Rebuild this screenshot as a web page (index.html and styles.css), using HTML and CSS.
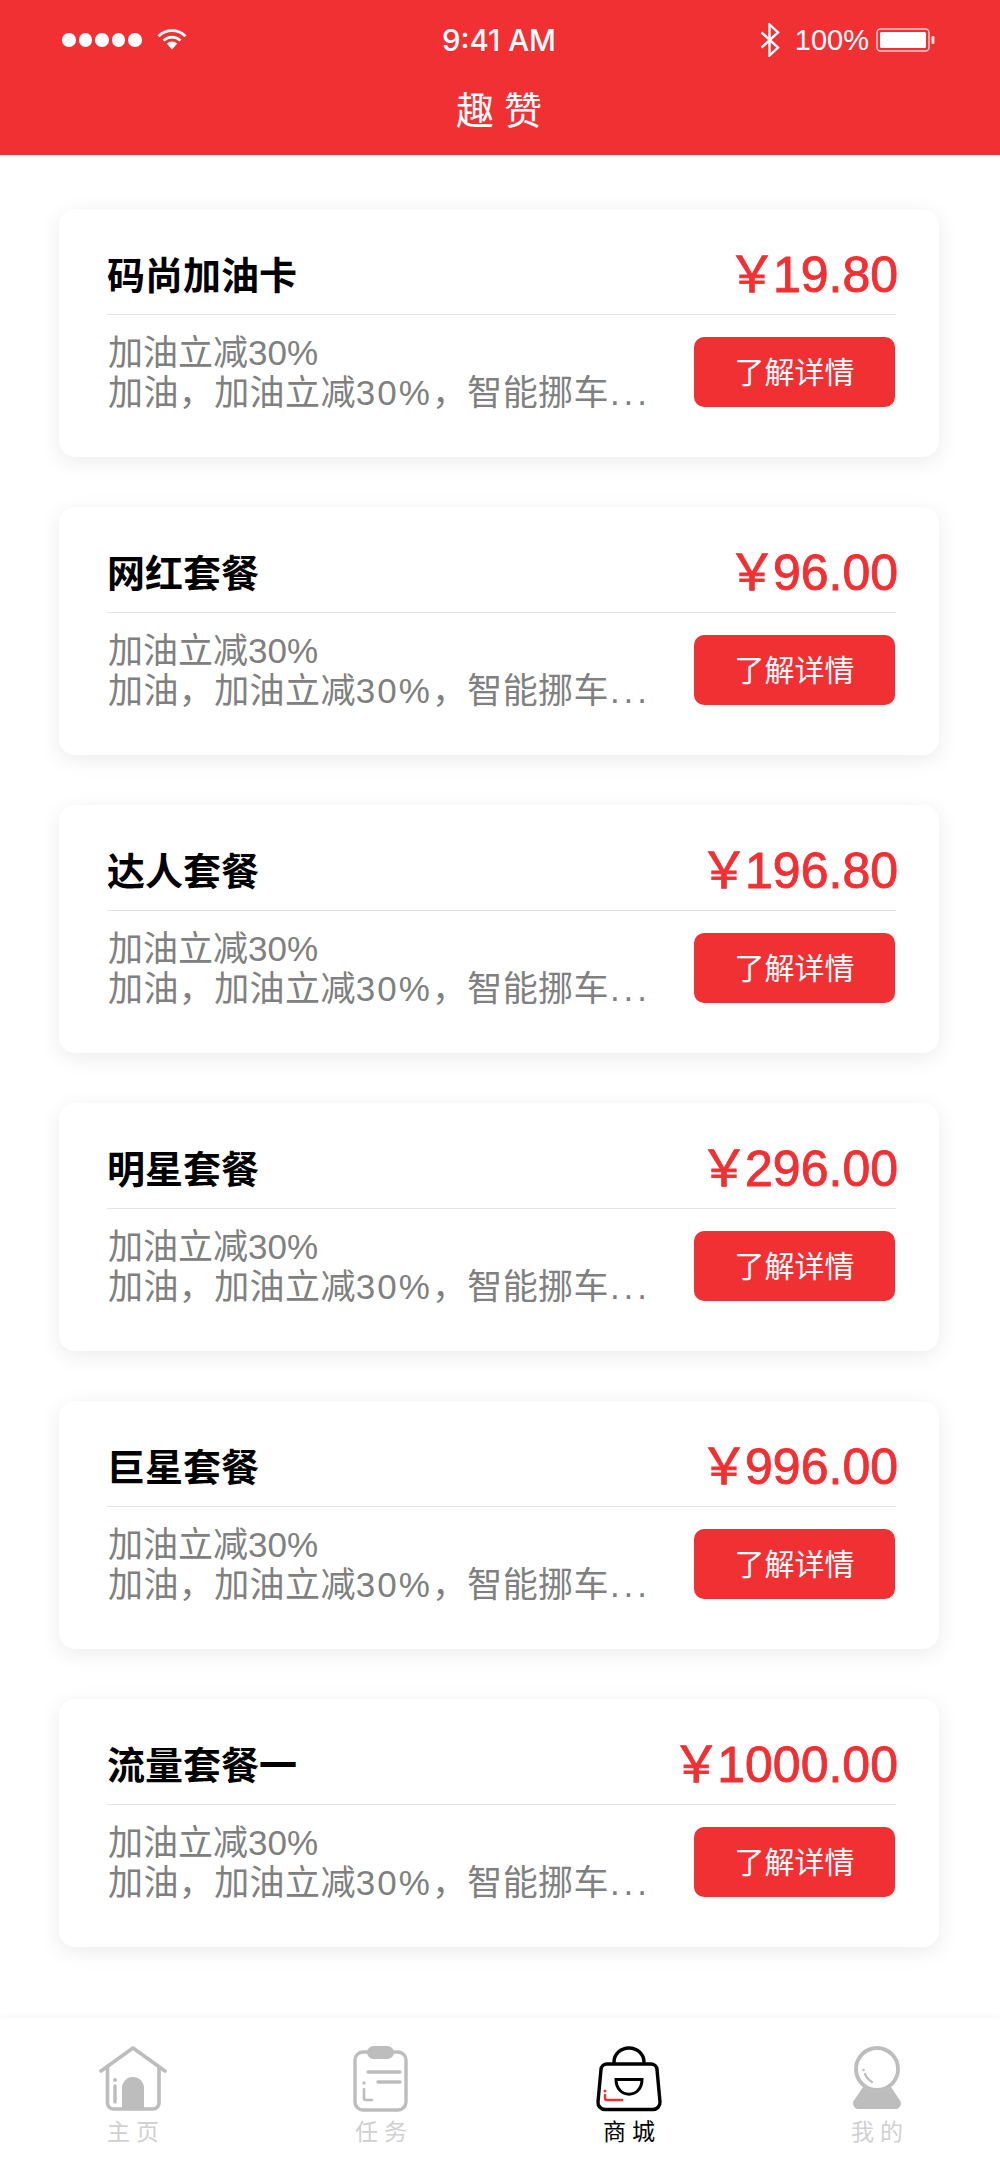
FILE: index.html
```html
<!DOCTYPE html>
<html lang="zh-CN">
<head>
<meta charset="utf-8">
<title>趣赞</title>
<link rel="stylesheet" href="styles.css">
</head>
<body>
<div class="page">
  <header class="header">
    <div class="status">
      <div class="status-left">
        <span class="dot"></span><span class="dot"></span><span class="dot"></span><span class="dot"></span><span class="dot"></span>
        <svg class="wifi" viewBox="0 0 30 22" width="30" height="22"><path d="M1.5 8.2C9 .8 21 .8 28.5 8.2" fill="none" stroke="#fff" stroke-width="2.6"/><path d="M6.5 12.6c4.8-4.6 12.2-4.6 17 0" fill="none" stroke="#fff" stroke-width="2.6"/><path d="M9.8 15.4c3-2.7 7.4-2.7 10.4 0L15 21.6z" fill="#fff"/></svg>
      </div>
      <div class="clock">9:41 AM</div>
      <div class="status-right">
        <svg class="bt" viewBox="0 0 20 34" width="20" height="34"><path d="M1.5 9.5 18 24.5 9.5 32.5V1.5L18 9.5 1.500 24.500" fill="none" stroke="#fff" stroke-width="2.400"/></svg>
        <span class="pct">100%</span>
        <svg class="batt" viewBox="0 0 60 24" width="60" height="24"><rect x="1" y="1" width="52" height="22" rx="3.500" fill="none" stroke="#fff" stroke-opacity=".75" stroke-width="1.500"/><rect x="4" y="4" width="46" height="16" rx="1.500" fill="#fff"/><rect x="55.500" y="8" width="3" height="8" rx="1.200" fill="#fff" fill-opacity=".8"/></svg>
      </div>
    </div>
    <h1 class="title">趣赞</h1>
  </header>

  <main class="list">
    <article class="card">
      <div class="card-top"><h2 class="name">码尚加油卡</h2><div class="price"><span class="yen">￥</span>19.80</div></div>
      <div class="card-body">
        <div class="desc"><p class="line">加油立减30%</p><p class="line line-long">加油，加油立减<span class="num">30%</span>，智能挪车<span class="more">...</span></p></div>
        <a class="btn">了解详情</a>
      </div>
    </article>
    <article class="card">
      <div class="card-top"><h2 class="name">网红套餐</h2><div class="price"><span class="yen">￥</span>96.00</div></div>
      <div class="card-body">
        <div class="desc"><p class="line">加油立减30%</p><p class="line line-long">加油，加油立减<span class="num">30%</span>，智能挪车<span class="more">...</span></p></div>
        <a class="btn">了解详情</a>
      </div>
    </article>
    <article class="card">
      <div class="card-top"><h2 class="name">达人套餐</h2><div class="price"><span class="yen">￥</span>196.80</div></div>
      <div class="card-body">
        <div class="desc"><p class="line">加油立减30%</p><p class="line line-long">加油，加油立减<span class="num">30%</span>，智能挪车<span class="more">...</span></p></div>
        <a class="btn">了解详情</a>
      </div>
    </article>
    <article class="card">
      <div class="card-top"><h2 class="name">明星套餐</h2><div class="price"><span class="yen">￥</span>296.00</div></div>
      <div class="card-body">
        <div class="desc"><p class="line">加油立减30%</p><p class="line line-long">加油，加油立减<span class="num">30%</span>，智能挪车<span class="more">...</span></p></div>
        <a class="btn">了解详情</a>
      </div>
    </article>
    <article class="card">
      <div class="card-top"><h2 class="name">巨星套餐</h2><div class="price"><span class="yen">￥</span>996.00</div></div>
      <div class="card-body">
        <div class="desc"><p class="line">加油立减30%</p><p class="line line-long">加油，加油立减<span class="num">30%</span>，智能挪车<span class="more">...</span></p></div>
        <a class="btn">了解详情</a>
      </div>
    </article>
    <article class="card">
      <div class="card-top"><h2 class="name">流量套餐一</h2><div class="price"><span class="yen">￥</span>1000.00</div></div>
      <div class="card-body">
        <div class="desc"><p class="line">加油立减30%</p><p class="line line-long">加油，加油立减<span class="num">30%</span>，智能挪车<span class="more">...</span></p></div>
        <a class="btn">了解详情</a>
      </div>
    </article>
  </main>

  <nav class="tabbar">
    <a class="tab">
      <svg class="icon" viewBox="0 0 70 66" width="70" height="66"><path d="M3 25 35 2 67 25" fill="none" stroke="#bdbdbd" stroke-width="3.600" stroke-linecap="round" stroke-linejoin="round"/><path d="M9.500 21V57a6 6 0 0 0 6 6H55a6 6 0 0 0 6-6V21" fill="none" stroke="#bdbdbd" stroke-width="3.600"/><path d="M24 63V42a11 11 0 0 1 22 0V63z" fill="#bdbdbd"/><circle cx="17" cy="34" r="2" fill="#bdbdbd"/><path d="M17 40V56" stroke="#bdbdbd" stroke-width="3.400" stroke-linecap="round"/></svg>
      <span class="tab-label">主页</span>
    </a>
    <a class="tab">
      <svg class="icon" viewBox="0 0 56 66" width="56" height="66"><rect x="2" y="6" width="51" height="58" rx="8" fill="none" stroke="#bdbdbd" stroke-width="3.400"/><rect x="14" y="0" width="27" height="13" rx="6.500" fill="#bdbdbd"/><path d="M15 26H47M25 36H47" stroke="#bdbdbd" stroke-width="3.400" stroke-linecap="round"/><circle cx="11" cy="37" r="1.700" fill="#bdbdbd"/><path d="M11 43V52a2 2 0 0 0 2 2H19" fill="none" stroke="#bdbdbd" stroke-width="2.600" stroke-linecap="round"/></svg>
      <span class="tab-label">任务</span>
    </a>
    <a class="tab tab-active">
      <svg class="icon" viewBox="0 0 68 66" width="68" height="66"><path d="M19 18V16a15 14 0 0 1 30 0V18" fill="none" stroke="#000" stroke-width="3.400"/><path d="M12 18H56a6 6 0 0 1 6 5.500L65 56a7 7 0 0 1-7 7.500H10a7 7 0 0 1-7-7.500L6 23.500A6 6 0 0 1 12 18z" fill="none" stroke="#000" stroke-width="3.400"/><path d="M21 33.500H47C47 53 21 53 21 33.500z" fill="none" stroke="#000" stroke-width="3"/><circle cx="10" cy="45" r="1.500" fill="#f23030"/><path d="M10 49V52a2 2 0 0 0 2 2H27" fill="none" stroke="#f23030" stroke-width="2.400" stroke-linecap="round"/></svg>
      <span class="tab-label">商城</span>
    </a>
    <a class="tab">
      <svg class="icon" viewBox="0 0 48 66" width="48" height="66"><path d="M10 41 2 53a6 6 0 0 0 2 10H44a6 6 0 0 0 2-10L38 41C30 47 18 47 10 41z" fill="#bdbdbd"/><circle cx="24" cy="23" r="21" fill="#fff" stroke="#bdbdbd" stroke-width="3.800"/><circle cx="10.500" cy="24" r="1.300" fill="#bdbdbd"/><path d="M12 28Q14 33 19 36" fill="none" stroke="#bdbdbd" stroke-width="2.200" stroke-linecap="round"/></svg>
      <span class="tab-label">我的</span>
    </a>
  </nav>
</div>
</body>
</html>
```

FILE: styles.css
```css
* { box-sizing: border-box; }

html, body { margin: 0; padding: 0; background: #fff; }

body {
  width: 1000px;
  height: 2166px;
  overflow: hidden;
  font-family: "Liberation Sans", "Noto Sans CJK SC", sans-serif;
}

.page {
  display: flex;
  flex-direction: column;
  height: 2166px;
}

.header {
  height: 155px;
  background: #f13033;
  color: #fff;
  flex: none;
}

.status {
  display: grid;
  grid-template-columns: 1fr auto 1fr;
  align-items: center;
  height: 58px;
  padding: 22px 64px 0 62px;
}

.status-left { display: flex; align-items: center; gap: 3px; }

.dot {
  width: 13.6px;
  height: 13.6px;
  border-radius: 50%;
  background: #fff;
}

.wifi { margin: -2px 0 0 12px; }

.clock {
  font-family: Inter, "Liberation Sans", sans-serif;
  font-size: 29.5px;
  font-weight: 500;
  text-align: center;
}

.status-right {
  display: flex;
  align-items: center;
  justify-content: flex-end;
  gap: 7px;
}

.bt { margin-right: 8px; }

.pct {
  font-family: "Liberation Sans", sans-serif;
  font-size: 29px;
}

.title {
  margin: 28px 0 0;
  font-family: "Noto Sans CJK SC", sans-serif;
  font-size: 38px;
  font-weight: 400;
  letter-spacing: 10px;
  line-height: 44px;
  text-align: center;
  padding-left: 8px;
}

.list {
  flex: 1;
  padding: 54px 61px 0 59px;
  display: flex;
  flex-direction: column;
  gap: 50px;
}

.card {
  height: 248px;
  background: #fff;
  border-radius: 16px;
  padding: 0 43px 0 48px;
  box-shadow: 0 5px 22px rgba(0, 0, 0, 0.08);
}

.card-top {
  height: 106px;
  display: flex;
  justify-content: space-between;
  align-items: flex-end;
  padding-bottom: 11px;
  border-bottom: 1px solid #e3e3e3;
}

.name {
  margin: 0 0 7px;
  font-family: "Noto Sans CJK SC", sans-serif;
  font-size: 38px;
  font-weight: 700;
  line-height: 46px;
  color: #000;
}

.price {
  margin-right: -2px;
  font-family: "Liberation Sans", "Noto Sans CJK SC", sans-serif;
  font-size: 50px;
  line-height: 56px;
  color: #f13033;
  -webkit-text-stroke: 0.9px #f13033;
}

.yen { letter-spacing: -4px; margin-left: -2px; }

.card-body {
  display: flex;
  justify-content: space-between;
  align-items: flex-start;
  padding-top: 22px;
}

.desc {
  margin: -4px 0 0 1px;
  font-family: "Liberation Sans", "Noto Sans CJK SC", sans-serif;
  font-size: 35px;
  line-height: 40px;
  color: #808080;
}

.line {
  margin: 0;
  white-space: nowrap;
}

.line-long { letter-spacing: 0.4px; }

.num { letter-spacing: 2px; }

.more { letter-spacing: 4px; margin-left: 1px; }

.btn {
  width: 201px;
  height: 70px;
  margin-right: 1px;
  border-radius: 10px;
  background: #f13033;
  color: #fff;
  font-family: "Noto Sans CJK SC", sans-serif;
  font-size: 30px;
  line-height: 67px;
  text-align: center;
}

.tabbar {
  flex: none;
  height: 148px;
  display: grid;
  grid-template-columns: repeat(4, 248px);
  padding-left: 9px;
  background: #fff;
  box-shadow: 0 -2px 6px rgba(0, 0, 0, 0.03);
}

.tab {
  display: flex;
  flex-direction: column;
  align-items: center;
  padding-top: 28px;
}

.icon { display: block; }

.tab-label {
  margin-top: 3px;
  font-family: "Noto Sans CJK SC", sans-serif;
  font-size: 23px;
  line-height: 30px;
  letter-spacing: 6px;
  padding-left: 6px;
  color: #d0d0d0;
}

.tab-active .tab-label { color: #000; }
```
